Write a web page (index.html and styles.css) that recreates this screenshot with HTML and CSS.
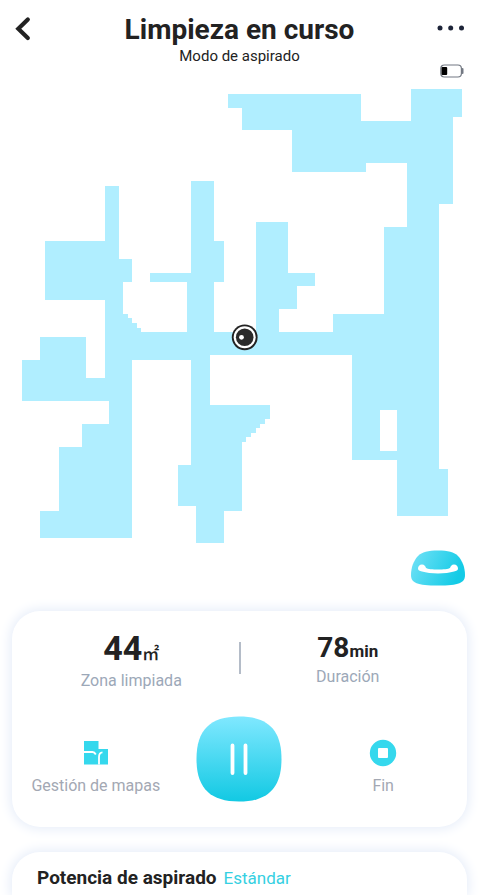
FILE: index.html
```html
<!doctype html>
<html lang="es">
<head>
    <meta charset="UTF-8">
    <meta name="viewport" content="width=device-width, initial-scale=1.0">
    <title>Limpieza en curso</title>
    <link rel="stylesheet" href="styles.css">
</head>
<body>
    <header class="header">
        <button class="icon-btn back" aria-label="Volver">
            <svg width="16" height="26" viewBox="0 0 16 26">
                <path d="M12.800 3.500L3.300 12.800L12.800 22" fill="none" stroke="#222" stroke-width="4.200" stroke-linecap="round" stroke-linejoin="miter"/>
            </svg>
        </button>
        <div class="heading">
            <h1>Limpieza en curso</h1>
            <p>Modo de aspirado</p>
        </div>
        <button class="icon-btn more" aria-label="Más opciones">
            <svg width="28" height="6" viewBox="0 0 28 6" fill="#1d2438">
                <circle cx="3" cy="3" r="2.500"/>
                <circle cx="13.700" cy="3" r="2.500"/>
                <circle cx="24.500" cy="3" r="2.500"/>
            </svg>
        </button>
    </header>

    <main class="main">
        <div class="battery">
            <svg width="24" height="14" viewBox="0 0 24 14">
                <rect x="0.800" y="1" width="20.600" height="12" rx="3.500" fill="#fff" stroke="#737983" stroke-width="1.200"/>
                <path d="M22.600 5v4" stroke="#737983" stroke-width="1.800" stroke-linecap="round"/>
                <rect x="1.500" y="3" width="5.700" height="8" rx="1" fill="#000"/>
            </svg>
        </div>

        <svg class="map" viewBox="0 84 480 462">
            <g fill="#b0eeff" fill-rule="evenodd" shape-rendering="crispEdges">
                <!-- habitaciones de la izquierda -->
                <path d="M105 186H119V259H132V282H123V314H128V318H132V323H137V328H141V332H192V360H132V538H40V511H59V447H82V424H109V401H22V360H40V337H86V378H105V300H45V241H105Z"/>
                <!-- centro -->
                <path d="M191 181H214V241H224V282H214V332H256V222H288V273H315V286H297V309H279V332H360V355H210V405H270V419H265V424H260V428H256V433H251V437H246V442H242V511H224V543H196V506H178V465H191V340H187V282H150V273H191Z"/>
                <!-- derecha -->
                <path d="M228 94H361V121H411V89H462V117H453V204H439V469H448V516H397V460H352V340H333V314H384V227H407V163H366V172H292V130H242V108H228ZM380 410V451H397V410Z"/>
            </g>
            <g class="robot">
                <circle cx="244.700" cy="337.300" r="12.900" fill="#222"/>
                <circle cx="244.700" cy="337.300" r="11" fill="#fff"/>
                <circle cx="244.700" cy="337.300" r="8.800" fill="#2a2a2a"/>
                <circle cx="241.500" cy="337.300" r="2.400" fill="#fff"/>
            </g>
        </svg>

        <div class="dock-row">
            <button class="icon-btn" aria-label="Volver a la base">
                <svg width="54" height="36" viewBox="0 0 54 36">
                    <defs>
                        <linearGradient id="dock" x1="0" y1="0" x2="1" y2="0.300">
                            <stop offset="0" stop-color="#74e2f7"/>
                            <stop offset="1" stop-color="#14cbe6"/>
                        </linearGradient>
                    </defs>
                    <path d="M27 .5C37 .5 43 2 47 6C51.500 10.500 54 18 54 25C54 33 48 35.500 27 35.500C6 35.500 0 33 0 25C0 18 2.500 10.500 7 6C11 2 17 .5 27 .5Z" fill="url(#dock)"/>
                    <path d="M11 14.500C13.500 14.500 14.500 16.500 15 18C18 20 36 20 39 18C39.500 16.500 40.500 14.500 43 14.500C45.500 14.500 47 16.500 47 18.500C47 20.500 45.500 21 43 21.500C35 24 19 24 11 21.500C8.500 21 7 20.500 7 18.500C7 16.500 8.500 14.500 11 14.500Z" fill="#fff"/>
                </svg>
            </button>
        </div>

        <section class="card status">
            <div class="stats">
                <div class="stat area">
                    <p class="value">44<span class="unit">㎡</span></p>
                    <p class="label">Zona limpiada</p>
                </div>
                <div class="divider"></div>
                <div class="stat time">
                    <p class="value">78<span class="unit">min</span></p>
                    <p class="label">Duración</p>
                </div>
            </div>
            <div class="actions">
                <button class="action">
                    <svg width="28" height="28" viewBox="0 0 28 28">
                        <path d="M2 2H16.500V10H26V25.500H2Z" fill="#35d8ed"/>
                        <path d="M2 13H10.500Q12.500 13 13.800 15.500M17 25.500V18Q17 13.500 20.500 13.300" fill="none" stroke="#fff" stroke-width="1.800"/>
                    </svg>
                    <span class="label">Gestión de mapas</span>
                </button>
                <button class="pause" aria-label="Pausar">
                    <svg width="86" height="86" viewBox="0 0 86 86">
                        <defs>
                            <linearGradient id="pause" x1="0" y1="0" x2="0" y2="1">
                                <stop offset="0" stop-color="#80e8ff"/>
                                <stop offset="1" stop-color="#12c9e3"/>
                            </linearGradient>
                        </defs>
                        <path d="M43 .5C72 .5 85.500 14 85.500 43C85.500 72 72 85.500 43 85.500C14 85.500 .5 72 .5 43C.5 14 14 .5 43 .5Z" fill="url(#pause)"/>
                        <path d="M36.500 29.500V57M49.500 29.500V57" stroke="#fff" stroke-width="3.800" stroke-linecap="round"/>
                    </svg>
                </button>
                <button class="action">
                    <svg width="28" height="28" viewBox="0 0 28 28">
                        <circle cx="14" cy="14" r="13.200" fill="#35d8ed"/>
                        <rect x="9" y="9" width="10" height="10" rx="1" fill="#fff"/>
                    </svg>
                    <span class="label">Fin</span>
                </button>
            </div>
        </section>

        <section class="card power">
            <h2>Potencia de aspirado</h2>
            <span class="level">Estándar</span>
        </section>
    </main>
</body>
</html>
```
FILE: styles.css
```css
* {
    padding: 0;
    margin: 0;
    box-sizing: border-box;
}
body {
    display: flex;
    flex-direction: column;
    min-height: 100vh;
    background: #fff;
    color: #222;
    font-family: Roboto, "Noto Sans CJK SC", sans-serif;
}
button {
    border: none;
    background: none;
    font: inherit;
    cursor: pointer;
}
svg {
    display: block;
}
.header {
    display: grid;
    grid-template-columns: 48px 1fr 48px;
    padding: 12px 1px 0 0;
}
.heading {
    text-align: center;
}
.heading h1 {
    font-size: 28px;
    line-height: 36px;
    font-weight: 700;
}
.heading p {
    font-size: 15px;
    line-height: 16px;
}
.icon-btn {
    align-self: start;
}
.back {
    padding: 4px 0 0 15px;
}
.more {
    padding: 13px 0 0 6px;
}
.main {
    flex: 1;
    display: flex;
    flex-direction: column;
}
.battery {
    display: flex;
    justify-content: flex-end;
    padding: 0 16px 6px 0;
}
.map {
    width: 100%;
}
.dock-row {
    display: flex;
    justify-content: flex-end;
    padding: 4px 15px 25px;
}
.card {
    margin: 0 13px 0 12px;
    border-radius: 28px;
    background: #fff;
    box-shadow: 0 0 12px 2px #e6edf9;
}
.status {
    padding: 18px 12px 25px;
    margin-bottom: 25px;
}
.stats {
    display: grid;
    grid-template-columns: 1fr 2px 1fr;
    margin-bottom: 23px;
}
.stat {
    text-align: center;
}
.value {
    display: flex;
    justify-content: center;
    align-items: baseline;
    font-weight: 700;
}
.area .value {
    height: 40px;
    font-size: 34px;
    line-height: 38px;
}
.time .value {
    height: 36px;
    font-size: 28px;
    line-height: 38px;
}
.unit {
    font-size: 17px;
    line-height: 20px;
}
.area .unit {
    font-weight: 500;
}
.label {
    font-size: 16px;
    line-height: 24px;
    color: #9ca8b8;
}
.divider {
    height: 32px;
    margin-top: 13px;
    background: #b4bcc8;
}
.actions {
    display: grid;
    grid-template-columns: 1fr 1fr 1fr;
    align-items: end;
}
.action {
    display: flex;
    flex-direction: column;
    align-items: center;
    gap: 7px;
    padding-bottom: 4px;
    white-space: nowrap;
}
.action .label {
    color: #a3a8b3;
}
.pause {
    justify-self: center;
}
.power {
    flex: 1;
    display: flex;
    align-items: baseline;
    gap: 7px;
    padding: 14px 25px 5px;
    border-radius: 28px 28px 0 0;
}
.power h2 {
    font-size: 19px;
    line-height: 24px;
    font-weight: 700;
}
.level {
    font-size: 17px;
    line-height: 24px;
    color: #35d0e2;
}
```
